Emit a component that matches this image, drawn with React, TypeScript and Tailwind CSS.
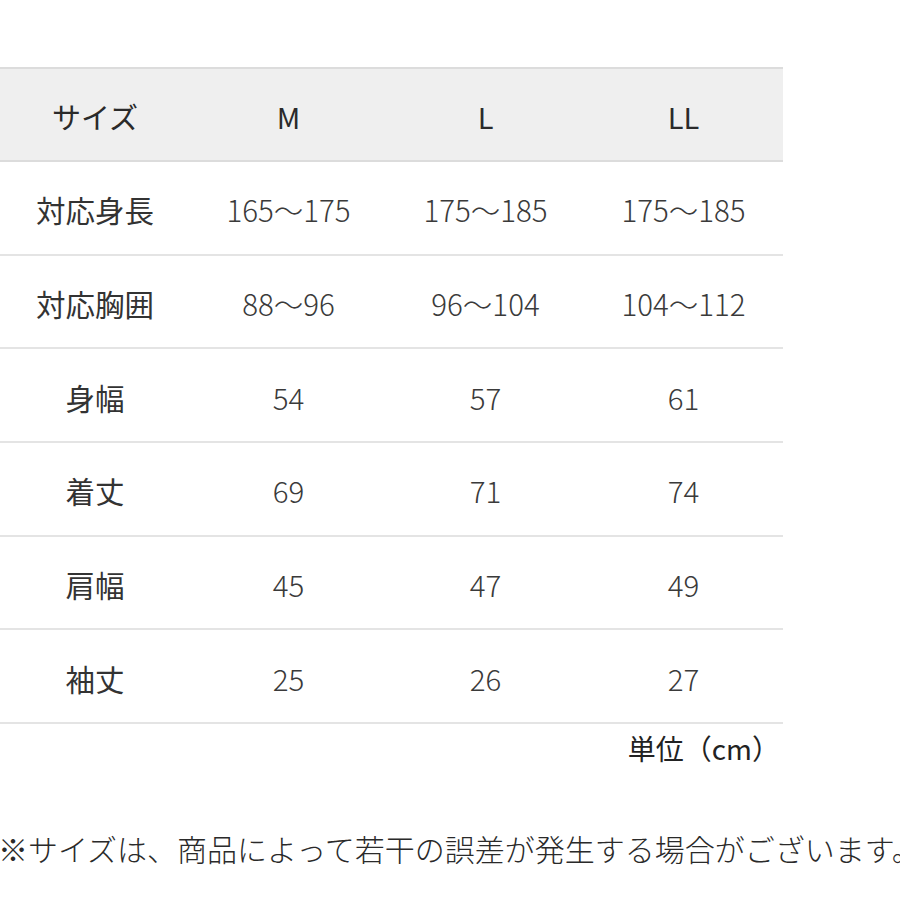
const header = ["サイズ", "M", "L", "LL"];

const rows: string[][] = [
  ["対応身長", "165〜175", "175〜185", "175〜185"],
  ["対応胸囲", "88〜96", "96〜104", "104〜112"],
  ["身幅", "54", "57", "61"],
  ["着丈", "69", "71", "74"],
  ["肩幅", "45", "47", "49"],
  ["袖丈", "25", "26", "27"],
];

const cols = "grid grid-cols-[190px_197px_197px_199px]";

export default function App() {
  return (
    <div
      className="w-[900px] h-[900px] overflow-hidden bg-white pt-[67px] text-[#2a2a2a]"
      style={{ fontFamily: '"Noto Sans CJK JP", "Noto Sans", sans-serif' }}
    >
      <div className="w-[783px]">
        <div className={`${cols} h-[95px] items-center bg-[#efefef] border-y-2 border-[#dcdcdc] text-[29px] pt-[5px]`}>
          {header.map((h) => (
            <div key={h} className="text-center">
              {h}
            </div>
          ))}
        </div>
        {rows.map((r) => (
          <div key={r[0]} className={`${cols} h-[93.7px] items-center border-b-2 border-[#e4e4e4] pt-[3px]`}>
            <div className="text-center text-[29.5px] text-[#333]">{r[0]}</div>
            {r.slice(1).map((v, i) => (
              <div key={i} className="text-center text-[29.5px] font-light text-[#3a3a3a]">
                {v}
              </div>
            ))}
          </div>
        ))}
      </div>
      <div className="w-[780px] text-right text-[28px] text-[#222] mt-[2px] leading-[44px]">単位（cm）</div>
      <div className="mt-[58px] whitespace-nowrap text-[30px] font-light text-[#2a2a2a] leading-[40px] -ml-[2px]">
        ※サイズは、商品によって若干の誤差が発生する場合がございます。
      </div>
    </div>
  );
}
